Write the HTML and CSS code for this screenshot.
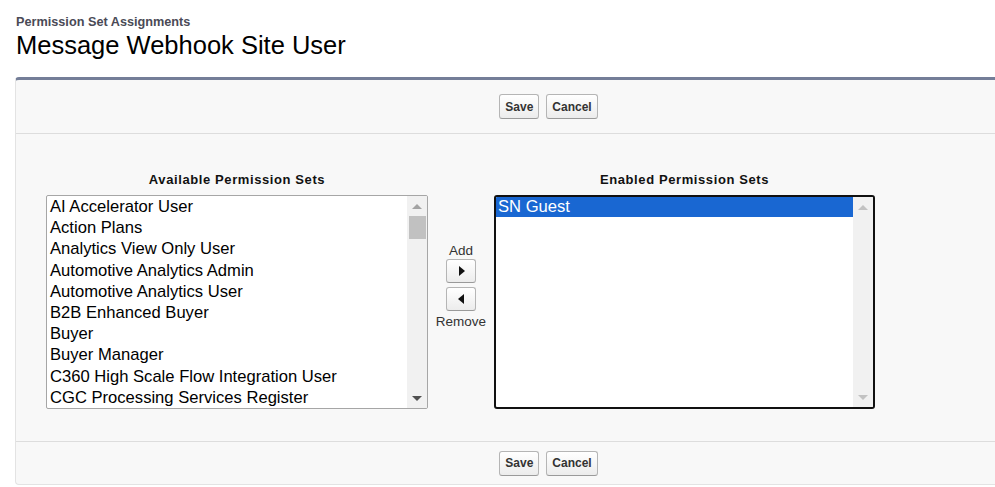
FILE: index.html
```html
<!DOCTYPE html>
<html>
<head>
<meta charset="utf-8">
<link rel="stylesheet" href="styles.css">
</head>
<body>
<div class="page-head">
  <div class="page-type">Permission Set Assignments</div>
  <h1 class="page-title">Message Webhook Site User</h1>
</div>
<div class="panel">
  <div class="btn-row top">
    <button class="btn">Save</button>
    <button class="btn">Cancel</button>
  </div>
  <div class="panel-body">
    <div class="dueling">
      <div class="col-label">Available Permission Sets</div>
      <div></div>
      <div class="col-label">Enabled Permission Sets</div>

      <div class="listbox">
        <ul class="options">
          <li>AI Accelerator User</li>
          <li>Action Plans</li>
          <li>Analytics View Only User</li>
          <li>Automotive Analytics Admin</li>
          <li>Automotive Analytics User</li>
          <li>B2B Enhanced Buyer</li>
          <li>Buyer</li>
          <li>Buyer Manager</li>
          <li>C360 High Scale Flow Integration User</li>
          <li>CGC Processing Services Register</li>
        </ul>
        <div class="vscroll">
          <span class="arr up"></span>
          <span class="thumb"></span>
          <span class="spacer"></span>
          <span class="arr down"></span>
        </div>
      </div>

      <div class="mover">
        <span class="mover-label">Add</span>
        <button class="arrow-btn" aria-label="Add"><span class="tri right"></span></button>
        <button class="arrow-btn" aria-label="Remove"><span class="tri left"></span></button>
        <span class="mover-label">Remove</span>
      </div>

      <div class="listbox focused">
        <ul class="options">
          <li class="selected">SN Guest</li>
        </ul>
        <div class="vscroll disabled">
          <span class="arr up"></span>
          <span class="spacer"></span>
          <span class="arr down"></span>
        </div>
      </div>
    </div>
  </div>
  <div class="btn-row bottom">
    <button class="btn">Save</button>
    <button class="btn">Cancel</button>
  </div>
</div>
</body>
</html>
```
FILE: styles.css
```css
html, body {
  margin: 0;
  padding: 0;
  background: #ffffff;
  overflow: hidden;
}
body {
  font-family: "Liberation Sans", Arial, sans-serif;
  color: #000;
}
.page-head {
  padding: 15px 0 0 16px;
  height: 62px;
}
.page-type {
  font-size: 12.7px;
  font-weight: bold;
  color: #4a4a56;
  line-height: 15px;
}
.page-title {
  margin: 0;
  font-size: 25.5px;
  font-weight: normal;
  line-height: 30px;
  color: #000;
}
.panel {
  margin-left: 15px;
  width: 1065px;
  background: #f8f8f8;
  border-top: 3px solid #747e98;
  border-left: 1px solid #e3e3e3;
  border-bottom: 1px solid #e3e3e3;
  border-radius: 4px;
}
.btn-row {
  display: flex;
  justify-content: center;
  align-items: center;
  gap: 7px;
}
.btn-row.top {
  height: 53px;
  border-bottom: 1px solid #dddddd;
}
.btn-row.bottom {
  height: 42px;
  border-top: 1px solid #dddddd;
}
.btn {
  font-family: "Liberation Sans", Arial, sans-serif;
  font-size: 12px;
  font-weight: bold;
  color: #333;
  height: 25px;
  padding: 0 5px;
  border: 1px solid #b5b5b5;
  border-bottom-color: #9a9a9a;
  border-radius: 3px;
  background: linear-gradient(#ffffff, #ececec);
  cursor: pointer;
}
.panel-body {
  height: 307px;
  padding: 38px 0 0 30px;
  box-sizing: border-box;
}
.dueling {
  display: grid;
  grid-template-columns: 382px 66px 381px;
  grid-template-rows: 23px 214px;
}
.col-label {
  font-size: 13px;
  font-weight: bold;
  text-align: center;
  color: #111;
  letter-spacing: 0.6px;
  line-height: 15px;
}
.listbox {
  display: flex;
  background: #fff;
  border: 1px solid #a6a6a6;
  border-radius: 2px;
  box-sizing: border-box;
  overflow: hidden;
}
.listbox.focused {
  border: 2px solid #111;
  border-radius: 3px;
}
.options {
  list-style: none;
  margin: 0;
  padding: 0;
  flex: 1;
  font-size: 16.6px;
}
.options li {
  height: 21.2px;
  line-height: 21px;
  padding: 0 3px;
  white-space: nowrap;
  color: #000;
}
.options li.selected {
  background: #1967d2;
  color: #fff;
  height: 20px;
  line-height: 19px;
  padding-left: 2px;
}
.vscroll {
  width: 20px;
  background: #f1f1f1;
  display: flex;
  flex-direction: column;
  align-items: center;
}
.vscroll .spacer { flex: 1; }
.arr {
  width: 0;
  height: 0;
  border-left: 5px solid transparent;
  border-right: 5px solid transparent;
}
.arr.up {
  border-bottom: 5px solid #a3a3a3;
  margin: 8px 0 7px;
}
.arr.down {
  border-top: 5px solid #505050;
  margin: 0 0 7px;
}
.vscroll.disabled .arr.up { border-bottom-color: #c2c2c2; }
.vscroll.disabled .arr.down { border-top-color: #c2c2c2; }
.thumb {
  width: 17px;
  height: 23px;
  background: #c1c1c1;
}
.mover {
  display: flex;
  flex-direction: column;
  align-items: center;
  padding-top: 48px;
}
.mover-label {
  font-size: 13.5px;
  color: #333;
  line-height: 15px;
}
.arrow-btn {
  width: 30px;
  height: 24px;
  margin: 1px 0 2px;
  padding: 0;
  border: 1px solid #b5b5b5;
  border-bottom-color: #9a9a9a;
  border-radius: 3px;
  background: linear-gradient(#ffffff, #ececec);
  display: flex;
  align-items: center;
  justify-content: center;
}
.arrow-btn + .arrow-btn { margin: 2px 0 3px; }
.tri {
  width: 0;
  height: 0;
  border-top: 5px solid transparent;
  border-bottom: 5px solid transparent;
}
.tri.right { border-left: 6px solid #111; margin-left: 1px; }
.tri.left { border-right: 6px solid #111; margin-right: 1px; }
```
